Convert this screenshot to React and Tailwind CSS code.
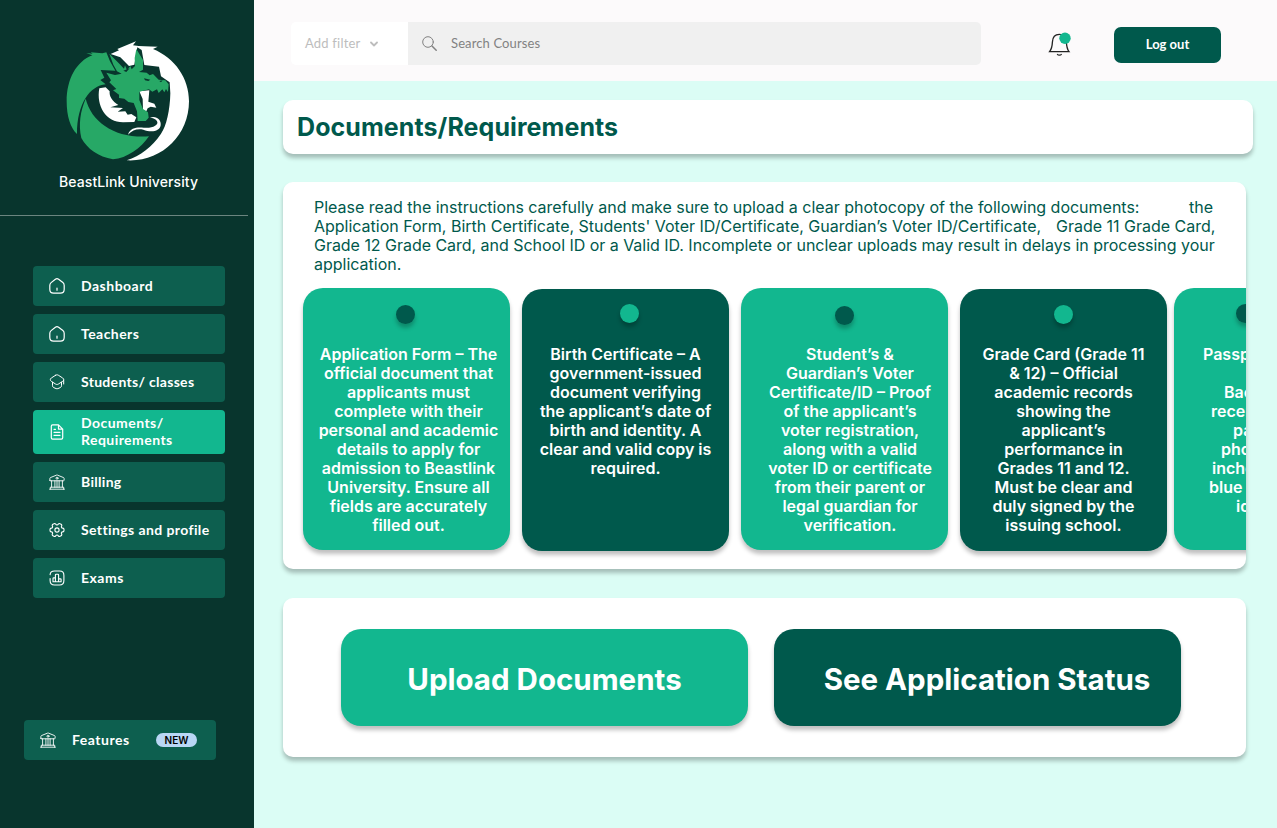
const F = "font-['Lato','Liberation_Sans',sans-serif]";

function Svg({ className, children, box = '0 0 16 16', sw = 1.1 }) {
  return (
    <svg className={className} viewBox={box} fill="none" stroke="currentColor" strokeWidth={sw} strokeLinecap="round" strokeLinejoin="round">
      {children}
    </svg>
  );
}

const bankIcon = (
  <Svg className="size-4 shrink-0" sw={0.9}>
    <path d="M.9 6.300V4.300c0-.3.200-.6.500-.7L7.600 1.100c.3-.1.500-.1.800 0l6.200 2.500c.3.100.5.400.5.700v2c0 .3-.2.500-.5.500H1.400c-.3 0-.5-.2-.5-.5zM.6 15.200h14.800M1.300 15.200v-2h13.400v2M2.600 13.200V6.800M5.900 13.200V6.800M8 13.200V6.800M10.100 13.200V6.800M13.400 13.200V6.800" />
    <circle cx="8" cy="4.200" r="1" />
  </Svg>
);

const icons = {
  home: (
    <Svg className="size-4 shrink-0" sw={1.2}>
      <path d="M.8 7.600c0-1.500.3-2.200 1.300-3L6.400 1.300c1-.8 2.200-.8 3.200 0l4.300 3.300c1 .8 1.300 1.500 1.300 3v3.600c0 2.600-1.200 3.900-3.800 3.900H4.600C2 15.100.8 13.800.8 11.200z" />
      <path d="M8 10v2.200" />
    </Svg>
  ),
  cap: (
    <Svg className="size-4 shrink-0" sw={1}>
      <path d="M6.700 1.200 2.300 4C1 4.900 1 6.400 2.300 7.300l4.400 2.800c.8.500 1.800.5 2.600 0l4.400-2.800c1.300-.9 1.300-2.400 0-3.300L9.300 1.200c-.8-.5-1.800-.5-2.600 0z" />
      <path d="M3.500 8.300v3.400c0 .8.500 1.600 1.200 1.900l2.400 1c.5.200 1.300.2 1.800 0l2.400-1c.7-.3 1.200-1.100 1.200-1.900V8.300M14.700 6v4" />
    </Svg>
  ),
  doc: (
    <Svg className="size-4 shrink-0" sw={1.2}>
      <path d="M9.500.9H3.600c-.8 0-1.300.5-1.300 1.300v11.600c0 .8.500 1.300 1.300 1.300h8.800c.8 0 1.300-.5 1.300-1.300V5.100zM9.500.9v4.200h4.200M5 5.300h1.500M5 8.300h6M5 11.300h6" />
    </Svg>
  ),
  bank: bankIcon,
  gear: (
    <Svg className="size-4 shrink-0" sw={1.1}>
      <circle cx="8" cy="8" r="2.100" />
      <path d="M1 8.600V7.400c0-.7.600-1.300 1.300-1.300 1.200 0 1.700-.9 1.100-2-.4-.6-.2-1.400.5-1.800l1.100-.6c.6-.4 1.300-.1 1.700.4.600 1.200 2 1.200 2.600 0 .4-.5 1.100-.8 1.700-.4l1.100.6c.7.4.9 1.200.5 1.800-.6 1.100-.1 2 1.100 2 .7 0 1.300.6 1.300 1.300v1.200c0 .7-.6 1.300-1.300 1.300-1.200 0-1.700.9-1.100 2 .4.6.2 1.400-.5 1.800l-1.100.6c-.6.4-1.300.1-1.700-.4-.6-1.200-2-1.200-2.600 0-.4.5-1.100.8-1.700.4l-1.100-.6c-.7-.4-.9-1.200-.5-1.800.6-1.100.1-2-1.100-2C1.600 9.900 1 9.300 1 8.600z" />
    </Svg>
  ),
  chart: (
    <Svg className="size-4 shrink-0" sw={1.1}>
      <path d="M1.100 8.500v2c0 3.300 1.100 4.500 4.400 4.500h5c3.300 0 4.400-1.200 4.400-4.500v-5C14.900 2.200 13.800 1 10.500 1h-5C2.600 1 1.300 2 1.100 4.600" />
      <path d="M4 11.800V8.600c0-.4.300-.7.700-.7h1.700v3.900zM6.400 11.800V4.900c0-.4.300-.7.700-.7h1.800c.4 0 .7.300.7.700v6.900zM9.600 11.800V8.900h1.800c.4 0 .7.300.7.700v2.200z" />
    </Svg>
  ),
};

function Logo() {
  return (
    <svg className="h-[140px] w-[145px]" viewBox="0 0 435 420">
      <g fill="#fff">
        <path d="M167 72 192 61 187 57 243 34 234 46C256 50 280 49 308 50L294 57C360 84 402 145 402 214C402 317 318 397 215 391C256 378 292 350 318 311C334 290 345 240 346 190L344 157L318 139L312 110L268 105L260 60L247 52L238 104L222 108L196 82Z" />
        <path d="M133 175C123 228 153 277 204 277L238 276L244 262L229 252L218 254L211 244L188 245L204 234L166 232L190 225C172 215 162 198 164 184L152 172Z" />
        <path d="M253 184 283 181 280 215 298 221 304 233 287 230 278 235 274 244 264 240 263 207Z" />
        <path d="M219 314C227 290 250 292 266 293C290 296 313 286 306 274C303 266 293 264 284 263C303 255 320 269 317 286C314 306 286 308 265 299C247 296 233 299 219 314Z" />
      </g>
      <g fill="#27a866">
        <path d="M94 69 113 71 107 67 142 70 154 67 165 94 181 122 137 120 148 143 136 150 152 163C105 168 66 220 66 312C46 294 35 258 35 214C35 148 64 94 112 76Z" />
        <path d="M92 206C110 278 182 326 282 319C258 354 216 385 174 388C130 380 97 357 79 324C70 284 76 243 92 206Z" />
        <path d="M154 128 180 135 200 131 186 124 175 104 163 71 193 101 207 116 210 106 216 121 226 108 230 118 240 108 239 84 244 57 264 90 264 119 252 126 275 128 284 136 294 132 311 149 331 151 341 163 339 186 333 177 328 187 322 178 311 189 306 178 292 185 282 178 253 185 253 210 264 237 279 247 281 263 272 273 248 273 246 244 236 219 220 216 208 206 192 204 192 194 174 181 184 177 163 157 168 151Z" />
      </g>
      <path d="M267 145 286 149 280 153 270 151ZM205 122 224 115 214 126ZM313 153 323 151 318 157Z" fill="#08352d" />
    </svg>
  );
}

const nav = [
  { icon: 'home', label: 'Dashboard', t: 'tracking-[0.5px]' },
  { icon: 'home', label: 'Teachers', t: 'tracking-[0.45px]' },
  { icon: 'cap', label: 'Students/ classes', t: 'tracking-[0.3px]' },
  { icon: 'doc', label: 'Documents/\nRequirements', active: true, t: 'tracking-[0.45px]' },
  { icon: 'bank', label: 'Billing', t: 'tracking-[0.3px]' },
  { icon: 'gear', label: 'Settings and profile', t: 'tracking-[0.4px]' },
  { icon: 'chart', label: 'Exams', t: 'tracking-[0.5px]' },
];

const docs = [
  { box: 'bg-[#12b78f]', dot: 'bg-[#00594c] mt-[17px] ml-[93px]', text: 'mt-[21px] ml-[4px]', lines: ['Application Form – The', 'official document that', 'applicants must', 'complete with their', 'personal and academic', 'details to apply for', 'admission to Beastlink', 'University. Ensure all', 'fields are accurately', 'filled out.'] },
  { box: 'bg-[#00594c] mt-px ml-3', dot: 'bg-[#12b78f] mt-[15px] ml-[98px]', text: 'mt-[22px]', lines: ['Birth Certificate – A', 'government-issued', 'document verifying', 'the applicant’s date of', 'birth and identity. A', 'clear and valid copy is', 'required.'] },
  { box: 'bg-[#12b78f] ml-3', dot: 'bg-[#00594c] mt-[18px] ml-[94px]', text: 'mt-[20px] ml-[11px]', lines: ['Student’s &', 'Guardian’s Voter', 'Certificate/ID – Proof', 'of the applicant’s', 'voter registration,', 'along with a valid', 'voter ID or certificate', 'from their parent or', 'legal guardian for', 'verification.'] },
  { box: 'bg-[#00594c] mt-px ml-3', dot: 'bg-[#12b78f] mt-[16px] ml-[94px]', text: 'mt-[21px]', lines: ['Grade Card (Grade 11', '& 12) – Official', 'academic records', 'showing the', 'applicant’s', 'performance in', 'Grades 11 and 12.', 'Must be clear and', 'duly signed by the', 'issuing school.'] },
];

const passport = [
  ['Passport', 'pl-[29px]'], ['', ''], ['Background', 'pl-[50px]'], ['recent', 'pl-[37px]'], ['passport', 'pl-[59px]'],
  ['photo', 'pl-[47px]'], ['inches', 'pl-[38px]'], ['blue', 'pl-[35px]'], ['id', 'pl-[62px]'],
];

const cardBase = 'h-[262px] w-[207px] shrink-0 rounded-[20px] shadow-[0_4px_4px_rgba(0,0,0,0.25)] ';
const dotBase = 'size-[19px] rounded-full shadow-[0_4px_4px_rgba(0,0,0,0.25)] ';
const panel = 'rounded-[10px] bg-white shadow-[0_4px_4px_rgba(0,0,0,0.25)] ';

export default function App() {
  return (
    <div className="flex h-[828px] w-[1277px] overflow-hidden bg-[#dbfdf5] font-['Inter',sans-serif]">
      <aside className="flex w-[254px] shrink-0 flex-col bg-[#08352d] pt-[30px] text-white">
        <div className="pl-[55px]"><Logo /></div>
        <div className="mt-[3px] pl-[59px] text-[14px] leading-[18px] font-medium tracking-[0.1px] whitespace-nowrap">BeastLink University</div>
        <div className="mt-6 h-px w-[248px] bg-[#6b857f]" />
        <nav className="mt-[50px] ml-[33px] flex w-48 flex-col gap-2">
          {nav.map((n) => (
            <div key={n.label} className={'flex items-center gap-4 rounded-[4px] pl-4 ' + (n.active ? 'h-11 bg-[#12b78f]' : 'h-10 bg-[#0d5f4f]')}>
              {icons[n.icon]}
              <span className={'pb-0.5 text-[14px] leading-[17px] font-bold whitespace-pre ' + F + ' ' + n.t}>{n.label}</span>
            </div>
          ))}
        </nav>
        <div className="mt-[122px] ml-6 flex h-10 w-48 items-center rounded-[4px] bg-[#0d5f4f] pl-4">
          {bankIcon}
          <span className={'ml-4 w-[84px] pb-0.5 text-[14px] leading-[17px] font-bold tracking-[0.5px] ' + F}>Features</span>
          <span className="flex h-3.5 w-[41px] items-center justify-center rounded-full bg-[#b9d7f5] pt-px text-[10px] font-semibold text-black">NEW</span>
        </div>
      </aside>

      <main className="flex min-w-0 flex-1 flex-col">
        <header className="flex h-[81px] items-start bg-[#fcfafb] pl-[37px]">
          <div className={'mt-[22px] flex h-[43px] w-[117px] items-center rounded-l-[5px] bg-white pl-3.5 text-[13px] text-[#bdbdbd] ' + F}>
            <span className="w-[65px] tracking-[0.2px]">Add filter</span>
            <Svg className="h-2 w-2" box="0 0 8 8" sw={1.8}><path d="M1 2.500 4 5.500 7 2.500" /></Svg>
          </div>
          <div className={'mt-[22px] flex h-[43px] w-[573px] items-center rounded-r-[5px] bg-[#f0f0f0] pl-3.5 text-[13px] text-[#828282] ' + F}>
            <Svg className="size-[15px]" box="0 0 15 15" sw={1}><circle cx="6" cy="6" r="5.300" /><path d="m10 10 4.200 4.200" strokeWidth="1.500" /></Svg>
            <span className="ml-3.5 tracking-[0.12px]">Search Courses</span>
          </div>
          <svg className="mt-[31px] ml-[67px] h-[26px] w-6" viewBox="0 0 24 26" fill="none" stroke="#222" strokeWidth="1.300">
            <path d="M1.600 20.600h19.400c-2-2.500-2.400-5-2.600-9.500C18.200 6 15.500 3.400 11.400 3.400S4.600 6 4.400 11.100c-.2 4.500-.8 7-2.800 9.500zM9.200 23c1 1.600 3.400 1.600 4.400 0" />
            <circle cx="17" cy="7.300" r="5.700" fill="#12b78f" stroke="none" />
          </svg>
          <button className={'mt-[27px] ml-[42px] h-9 w-[107px] rounded-[7px] bg-[#00594c] text-[13px] font-bold text-white ' + F}>Log out</button>
        </header>

        <h1 className={'mt-[19px] ml-[29px] flex h-[54px] w-[970px] items-center pt-0.5 pl-3.5 text-[25px] font-bold tracking-[0.08px] text-[#00594c] ' + panel}>Documents/Requirements</h1>

        <section className={'mt-7 ml-[29px] h-[387px] w-[963px] ' + panel}>
          <p className="pt-4 pl-[31px] text-[16px] leading-[19px] tracking-[-0.01px] whitespace-pre text-[#00594c]">
            <span className="flex"><span className="w-[875px]">Please read the instructions carefully and make sure to upload a clear photocopy of the following documents:</span><span>the</span></span>
            <span className="flex"><span className="w-[742px]">Application Form, Birth Certificate, Students' Voter ID/Certificate, Guardian’s Voter ID/Certificate,</span><span>Grade 11 Grade Card,</span></span>
            <span className="block tracking-[-0.03px]">Grade 12 Grade Card, and School ID or a Valid ID. Incomplete or unclear uploads may result in delays in processing your</span>
            <span className="block">application.</span>
          </p>
          <div className="mt-[7px] flex h-[282px] items-start overflow-hidden pt-[7px] pl-5 text-center text-[16px] leading-[19px] font-semibold whitespace-nowrap text-white">
            {docs.map((d) => (
              <article key={d.lines[0]} className={'flex flex-col ' + cardBase + d.box}>
                <div className={dotBase + d.dot} />
                <div className={d.text}>{d.lines.map((l) => <div key={l}>{l}</div>)}</div>
              </article>
            ))}
            <article className={'ml-[7px] flex flex-col text-left ' + cardBase + 'bg-[#12b78f]'}>
              <div className={dotBase + 'mt-4 ml-[62px] bg-[#00594c]'} />
              <div className="mt-[22px]">{passport.map(([l, p], i) => <div key={i} className={'h-[19px] ' + p}>{l}</div>)}</div>
            </article>
          </div>
        </section>

        <section className={'mt-[29px] ml-[29px] flex h-[159px] w-[963px] gap-[26px] pt-[31px] pl-[58px] ' + panel}>
          <button className="h-[97px] w-[407px] rounded-[20px] bg-[#12b78f] pt-1 text-[29.5px] font-bold text-white shadow-[0_4px_4px_rgba(0,0,0,0.25)]">Upload Documents</button>
          <button className="h-[97px] w-[407px] rounded-[20px] bg-[#00594c] pt-1 pl-[19px] text-[29.5px] font-bold text-white shadow-[0_4px_4px_rgba(0,0,0,0.25)]">See Application Status</button>
        </section>
      </main>
    </div>
  );
}
